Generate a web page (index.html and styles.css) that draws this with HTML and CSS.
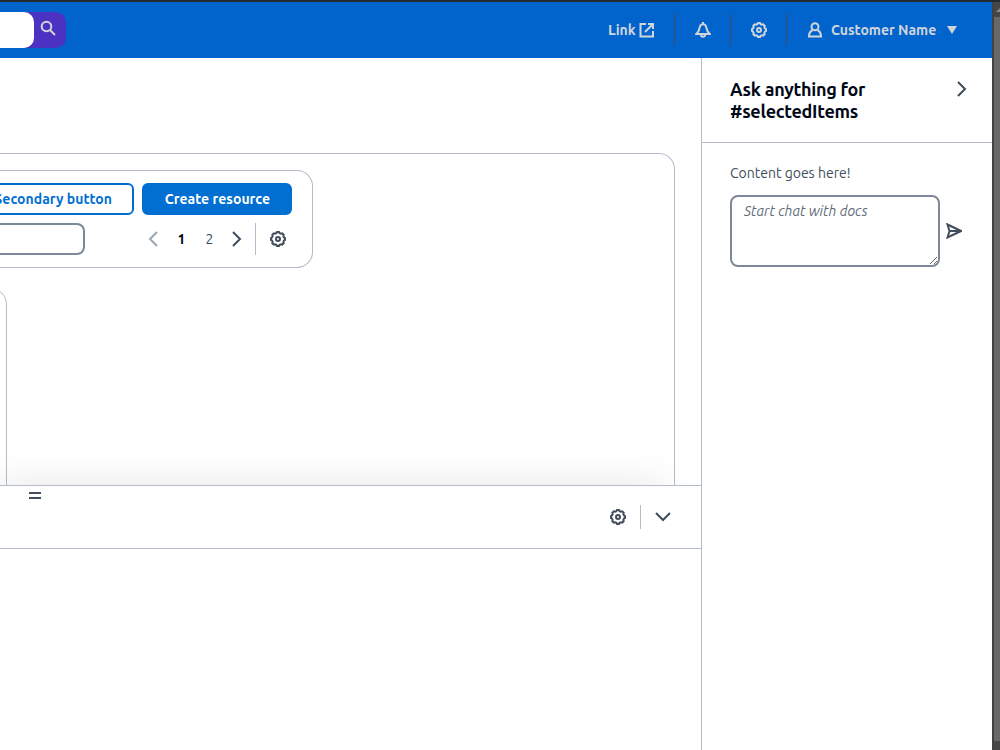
FILE: index.html
```html
<!DOCTYPE html>
<html lang="en">
<head>
    <meta charset="UTF-8">
    <meta name="viewport" content="width=device-width, initial-scale=1.0">
    <title>Resources</title>
    <link rel="stylesheet" href="styles.css">
</head>
<body>
    <!-- Shared icon shapes -->
    <svg class="icon-defs" width="0" height="0">
        <symbol id="gear" viewBox="0 0 16 16">
            <path d="M6.4 2.1 7 1h2l.6 1.1 1.4.6 1.2-.4 1.5 1.5-.4 1.2.6 1.4L15 7v2l-1.1.6-.6 1.4.4 1.2-1.5 1.5-1.2-.4-1.4.6L9 15H7l-.6-1.1-1.4-.6-1.2.4-1.5-1.5.4-1.2-.6-1.4L1 9V7l1.1-.6.6-1.4-.4-1.2 1.5-1.5 1.2.4z"/>
            <circle cx="8" cy="8" r="2"/>
        </symbol>
        <symbol id="angle-right" viewBox="0 0 16 16">
            <path d="M4 1l7 7-7 7"/>
        </symbol>
    </svg>

    <div class="window">
        <div class="app">
            <header class="top-nav">
                <div class="search">
                    <div class="search-input"></div>
                    <svg class="icon" viewBox="0 0 16 16"><circle cx="6.5" cy="6.5" r="4.8"/><path d="M10 10l5 5"/></svg>
                </div>
                <nav class="utilities">
                    <a class="utility link"><span>Link</span>
                        <svg class="icon" viewBox="0 0 16 16"><path d="M7 2H1.500v12.500H14V9M9 2h5v5M14 2L6 10"/></svg>
                    </a>
                    <a class="utility">
                        <svg class="icon" viewBox="0 0 16 16"><path d="M8 0v2M1.200 12h13.600C12.800 10.500 12 9 11.600 6.500 11.200 3.800 10 2.200 8 2.200S4.800 3.800 4.400 6.500C4 9 3.200 10.500 1.200 12zM6 12v1c0 2.300 4 2.300 4 0v-1"/></svg>
                    </a>
                    <a class="utility">
                        <svg class="icon"><use href="#gear"/></svg>
                    </a>
                    <a class="utility user">
                        <svg class="icon" viewBox="0 0 16 16"><circle cx="8" cy="4.700" r="3.500"/><path d="M5.500 8.200C3 9.200 2 11 2 14.500h12c0-3.500-1-5.300-3.500-6.300"/></svg>
                        <span>Customer Name</span>
                        <svg class="caret" viewBox="0 0 10 8"><path d="M0 0h10L5 8z"/></svg>
                    </a>
                </nav>
            </header>

            <div class="layout">
                <main class="main">
                    <div class="content">
                        <section class="container">
                            <div class="table-header">
                                <div class="actions">
                                    <button class="btn"><span>Secondary button</span></button>
                                    <button class="btn primary"><span>Create resource</span></button>
                                </div>
                                <div class="tools">
                                    <div class="filter"></div>
                                    <div class="pagination">
                                        <svg class="icon prev"><use href="#angle-right"/></svg>
                                        <span class="current">1</span>
                                        <span>2</span>
                                        <svg class="icon"><use href="#angle-right"/></svg>
                                    </div>
                                    <div class="preferences">
                                        <svg class="icon"><use href="#gear"/></svg>
                                    </div>
                                </div>
                            </div>
                            <div class="table-card"></div>
                        </section>
                    </div>
                    <section class="split-panel">
                        <div class="split-header">
                            <div class="handle"></div>
                            <div class="split-actions">
                                <svg class="icon"><use href="#gear"/></svg>
                                <div class="divider"></div>
                                <svg class="icon down"><use href="#angle-right"/></svg>
                            </div>
                        </div>
                    </section>
                </main>

                <aside class="help">
                    <div class="help-header">
                        <h2>Ask anything for #selectedItems</h2>
                        <svg class="icon"><use href="#angle-right"/></svg>
                    </div>
                    <div class="help-body">
                        <p>Content goes here!</p>
                        <div class="chat">
                            <textarea placeholder="Start chat with docs"></textarea>
                            <svg class="icon" viewBox="0 0 16 16"><path d="M1.500 1.500L15 8 1.500 14.500 3.500 8zM3.500 8H14"/></svg>
                        </div>
                    </div>
                </aside>
            </div>
        </div>
        <div class="scrollbar">
            <svg class="scroll-arrow" viewBox="0 0 4 4"><path d="M0 4l4-4v4z"/></svg>
            <div class="thumb"></div>
        </div>
    </div>
</body>
</html>
```
FILE: styles.css
```css
* {
    margin: 0;
    padding: 0;
    box-sizing: border-box;
}

body {
    height: 750px;
    overflow: hidden;
    background: #fff;
    color: #414d5c;
    font-family: Ubuntu, "Noto Sans", sans-serif;
    font-size: 14px;
    line-height: 20px;
}

.icon-defs {
    position: absolute;
}

.icon {
    width: 16px;
    height: 16px;
    flex: none;
    display: block;
    fill: none;
    stroke: #414d5c;
    stroke-width: 2;
}

.window {
    height: 750px;
    display: flex;
    border-top: 2px solid #232b30;
}

.app {
    width: 992px;
    display: flex;
    flex-direction: column;
}

/* Top navigation */
.top-nav {
    height: 56px;
    flex: none;
    display: flex;
    justify-content: space-between;
    align-items: center;
    background: #0064cc;
}

.search {
    width: 66px;
    height: 36px;
    display: flex;
    background: #4b32c3;
    border-radius: 0 10px 10px 0;
}

.search-input {
    width: 34px;
    background: #fff;
    border-radius: 0 10px 10px 0;
}

.search .icon {
    margin: 8px 0 0 6px;
}

.top-nav .icon {
    stroke: #d1d5db;
}

.utilities {
    display: flex;
    padding-right: 35px;
    color: #d1d5db;
    font-weight: 600;
}

.utility {
    height: 32px;
    padding: 0 20px;
    display: flex;
    align-items: center;
}

.utility + .utility {
    border-left: 1px solid #414d5c;
    padding-right: 19px;
}

.utilities .link {
    padding-right: 19px;
}

.link span {
    width: 28px;
}

.link .icon {
    margin-left: 3px;
}

.utilities .user {
    padding-right: 0;
}

.user span {
    width: 105px;
    margin-left: 8px;
    white-space: nowrap;
}

.caret {
    width: 10px;
    height: 8px;
    margin-left: 11px;
    fill: #d1d5db;
}

/* Page layout */
.layout {
    flex: 1;
    display: flex;
    min-height: 0;
}

.main {
    width: 701px;
    display: flex;
    flex-direction: column;
    overflow: hidden;
}

.content {
    height: 427px;
    flex: none;
    padding: 95px 26px 0 0;
    overflow: hidden;
}

.container {
    height: 360px;
    padding-top: 16px;
    border: 1px solid #b4bbca;
    border-left: 0;
    border-radius: 0 16px 0 0;
}

.table-header {
    width: 313px;
    height: 98px;
    padding: 12px 20px 0 0;
    border: 1px solid #b4bbca;
    border-left: 0;
    border-radius: 0 16px 16px 0;
}

.actions {
    display: flex;
    justify-content: flex-end;
    gap: 8px;
}

.btn {
    width: 170px;
    height: 32px;
    flex: none;
    padding-right: 20px;
    background: #fff;
    border: 2px solid #006fd1;
    border-radius: 6px;
    color: #006fd1;
    font: inherit;
    font-weight: 600;
    text-align: right;
    white-space: nowrap;
    letter-spacing: 0.03px;
}

.btn.primary {
    width: 150px;
    background: #006fd1;
    color: #fff;
}

.tools {
    display: flex;
    margin-top: 8px;
}

.filter {
    width: 85px;
    height: 32px;
    border: 2px solid #7d8998;
    border-left: 0;
    border-radius: 0 8px 8px 0;
}

.pagination {
    width: 170px;
    display: flex;
    align-items: center;
    padding-left: 60px;
}

.pagination span {
    width: 28px;
    text-align: center;
}

.pagination span.current {
    margin-left: 6.5px;
    color: #000716;
    font-weight: 700;
}

.pagination span + .icon {
    margin-left: 5.5px;
}

.pagination .prev {
    stroke: #9ba7b6;
    transform: scaleX(-1);
}

.preferences {
    padding: 8px 0 0 14px;
    border-left: 1px solid #b4bbca;
}

.table-card {
    width: 40px;
    height: 220px;
    margin: 20px 0 0 -33px;
    border: 1px solid #b4bbca;
    border-radius: 16px;
}

/* Split panel */
.split-panel {
    position: relative;
    flex: 1;
    margin-left: -40px;
    padding-left: 40px;
    background: #fff;
    border-top: 1px solid #b4bbca;
    box-shadow: 0 -36px 36px -36px rgba(0, 7, 22, 0.1);
}

.split-header {
    height: 63px;
    display: flex;
    justify-content: space-between;
    border-bottom: 1px solid #b4bbca;
}

.handle {
    width: 12px;
    height: 7px;
    margin: 6px 0 0 29px;
    border-top: 2px solid #414d5c;
    border-bottom: 2px solid #414d5c;
}

.split-actions {
    display: flex;
    align-items: center;
    padding-right: 30px;
}

.divider {
    width: 1px;
    height: 24px;
    margin: 0 14px;
    background: #b4bbca;
}

.down {
    transform: rotate(90deg);
}

/* Help panel */
.help {
    width: 291px;
    border-left: 1px solid #b4bbca;
}

.help-header {
    height: 85px;
    padding: 20px 22px 0 28px;
    display: flex;
    justify-content: space-between;
    border-bottom: 1px solid #b4bbca;
}

h2 {
    width: 150px;
    color: #000716;
    font-size: 18px;
    line-height: 22px;
    font-weight: 600;
    letter-spacing: -0.27px;
}

.help-header .icon {
    margin-top: 3px;
}

.help-body {
    padding: 20px 28px;
}

.chat {
    display: flex;
    align-items: center;
    gap: 6px;
    margin-top: 12px;
}

textarea {
    width: 210px;
    height: 72px;
    flex: none;
    padding: 4px 12px;
    border: 2px solid #7d8998;
    border-radius: 8px;
    background: #fff;
    font: inherit;
    resize: both;
}

textarea::placeholder {
    color: #5f6b7a;
    font-style: italic;
}

/* Window scrollbar */
.scrollbar {
    width: 8px;
    padding: 9px 0 9px;
    display: flex;
    flex-direction: column;
    align-items: flex-end;
    background: #464646;
    border-left: 2px solid #424242;
}

.scroll-arrow {
    width: 4px;
    height: 4px;
    margin-top: -3px;
    margin-bottom: 5px;
    fill: #888;
    flex: none;
}

.thumb {
    width: 6px;
    flex: 1;
    background: #686868;
}
```
